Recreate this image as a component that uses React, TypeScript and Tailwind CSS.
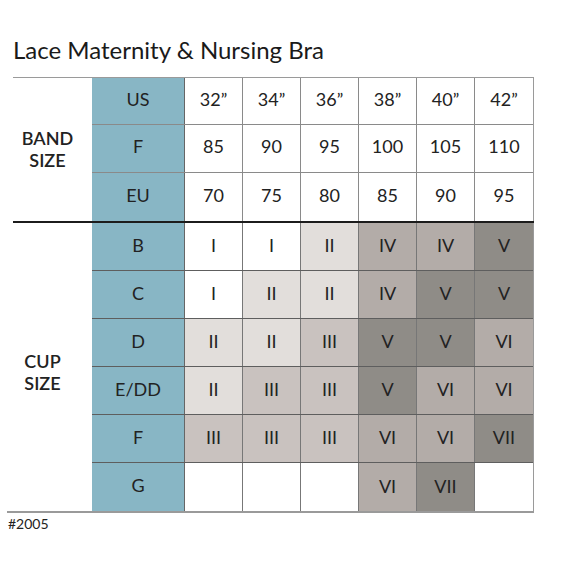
import React from 'react';

type Shade = 'w' | 'l' | 'm' | 'g' | 'd';

const shadeBg: Record<Shade, string> = {
    w: 'bg-white',
    l: 'bg-[#e2dedb]',
    m: 'bg-[#c9c2bf]',
    g: 'bg-[#b3aca8]',
    d: 'bg-[#8f8c87]',
};

const bandRows = [
    { label: 'US', values: ['32”', '34”', '36”', '38”', '40”', '42”'], h: 'h-[47px]' },
    { label: 'F', values: ['85', '90', '95', '100', '105', '110'], h: 'h-[48px]' },
    { label: 'EU', values: ['70', '75', '80', '85', '90', '95'], h: 'h-[48px]' },
];

const cupRows: { label: string; cells: [string, Shade][] }[] = [
    { label: 'B', cells: [['I', 'w'], ['I', 'w'], ['II', 'l'], ['IV', 'g'], ['IV', 'g'], ['V', 'd']] },
    { label: 'C', cells: [['I', 'w'], ['II', 'l'], ['II', 'l'], ['IV', 'g'], ['V', 'd'], ['V', 'd']] },
    { label: 'D', cells: [['II', 'l'], ['II', 'l'], ['III', 'm'], ['V', 'd'], ['V', 'd'], ['VI', 'g']] },
    { label: 'E/DD', cells: [['II', 'l'], ['III', 'm'], ['III', 'm'], ['V', 'd'], ['VI', 'g'], ['VI', 'g']] },
    { label: 'F', cells: [['III', 'm'], ['III', 'm'], ['III', 'm'], ['VI', 'g'], ['VI', 'g'], ['VII', 'd']] },
    { label: 'G', cells: [['', 'w'], ['', 'w'], ['', 'w'], ['VI', 'g'], ['VII', 'd'], ['', 'w']] },
];

export default function App() {
    return (
        <div className="w-[574px] h-[574px] bg-white text-[#222] font-['Lato','Open_Sans',sans-serif]">
            <div className="h-[77px] pt-[38px] pl-[13px] text-[24px] leading-[24px] text-[#1a1a1a]">
                Lace Maternity &amp; Nursing Bra
            </div>

            {/* band size */}
            <div className="ml-[13px] w-[521px] flex border-t border-[#9a9a9a]">
                <div className="w-[80px] flex items-center justify-center pr-[10px] pb-[2px] text-[18px] leading-[22px] font-semibold text-center">
                    BAND<br />SIZE
                </div>
                <div className="flex-1 border-r border-[#9a9a9a]">
                    {bandRows.map((row, i) => (
                        <div
                            key={row.label}
                            className={`flex ${row.h} ${i < bandRows.length - 1 ? 'border-b border-[#8a8a8a]' : ''}`}
                        >
                            <div className="w-[93px] bg-[#88b6c5] border-r border-[#666] flex items-center justify-center pb-[4px] text-[18px]">
                                {row.label}
                            </div>
                            {row.values.map((v, j) => (
                                <div
                                    key={j}
                                    className={`w-[58px] flex items-center justify-center pb-[4px] text-[18px] ${j < 5 ? 'border-r border-[#8a8a8a]' : ''}`}
                                >
                                    {v}
                                </div>
                            ))}
                        </div>
                    ))}
                </div>
            </div>

            {/* cup size */}
            <div className="ml-[13px] w-[521px] flex border-t-2 border-[#1c1c1c]">
                <div className="w-[80px] flex items-center justify-center pr-[20px] pt-[10px] text-[18px] leading-[22px] font-semibold text-center">
                    CUP<br />SIZE
                </div>
                <div className="flex-1 border-r border-[#9a9a9a]">
                    {cupRows.map((row, i) => (
                        <div
                            key={row.label + i}
                            className={`flex h-[48px] ${i < cupRows.length - 1 ? 'border-b border-[#5e5e5e]' : ''}`}
                        >
                            <div className="w-[93px] bg-[#88b6c5] border-r border-[#666] flex items-center justify-center pb-[3px] text-[18px]">
                                {row.label}
                            </div>
                            {row.cells.map(([v, s], j) => (
                                <div
                                    key={j}
                                    className={`w-[58px] flex items-center justify-center pb-[2px] text-[18px] ${shadeBg[s]} ${j < 5 ? 'border-r border-[#777]' : ''}`}
                                >
                                    {v}
                                </div>
                            ))}
                        </div>
                    ))}
                </div>
            </div>
            <div className="ml-[7px] w-[527px] h-[2px] bg-[#9a9a9a]" />

            <div className="pl-[8px] mt-[4px] text-[14px] leading-[14px]">#2005</div>
        </div>
    );
}
